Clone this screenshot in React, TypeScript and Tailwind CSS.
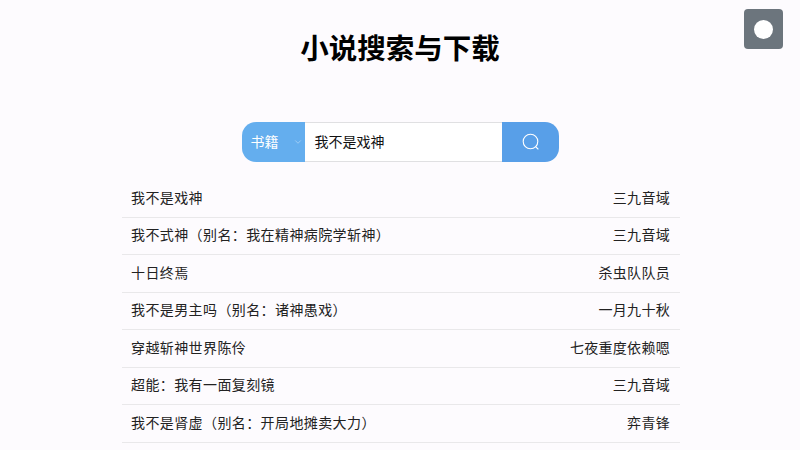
import React from 'react';
import { ChevronDown } from 'lucide-react';

const books = [
  { title: '我不是戏神', author: '三九音域' },
  { title: '我不式神（别名：我在精神病院学斩神）', author: '三九音域' },
  { title: '十日终焉', author: '杀虫队队员' },
  { title: '我不是男主吗（别名：诸神愚戏）', author: '一月九十秋' },
  { title: '穿越斩神世界陈伶', author: '七夜重度依赖嗯' },
  { title: '超能：我有一面复刻镜', author: '三九音域' },
  { title: '我不是肾虚（别名：开局地摊卖大力）', author: '弈青锋' },
];

const App: React.FC = () => {
  return (
    <div className="relative h-[450px] w-[800px] overflow-hidden bg-[#fdfbfe] font-['Noto_Sans_CJK_SC','Noto_Sans',sans-serif]">
      <h1 className="pt-[27px] text-center text-[28.5px] leading-[40px] font-bold text-black">小说搜索与下载</h1>

      <div className="mt-[55px] ml-[242px] flex h-[40px] w-[317px] overflow-hidden rounded-[14px]">
        <div className="flex w-[63px] items-center justify-between bg-[#64aeee] pr-[2px] pb-[2px] pl-[8.5px] text-[14px] text-white">
          <span>书籍</span>
          <ChevronDown size={10} strokeWidth={1.25} className="mt-[2px] text-white/70" />
        </div>
        <div className="flex flex-1 items-center border-y border-[#e0e0e2] bg-white pb-[1px] pl-[9.5px] text-[14px] text-[#111]">我不是戏神</div>
        <div className="flex w-[57px] items-center justify-center bg-[#589fe8]">
          <svg width="20" height="20" viewBox="0 0 20 20" fill="none" stroke="white" strokeWidth="1.1" strokeLinecap="round">
            <circle cx="9.5" cy="9.5" r="7.3" />
            <path d="M14.8 14.8 L17 17" />
          </svg>
        </div>
      </div>

      <div className="mt-[18px] ml-[122px] w-[558px]">
        {books.map((book) => (
          <div
            key={book.title}
            className="flex h-[37.5px] items-center justify-between border-b border-[#e9e8ea] pr-[10px] pb-[2px] pl-[9px] text-[14px] text-[#222]"
          >
            <span className="tracking-[0.4px]">{book.title}</span>
            <span className="tracking-[0.3px]">{book.author}</span>
          </div>
        ))}
      </div>

      {/* floating button */}
      <div className="absolute top-[9px] left-[744px] flex h-[40px] w-[39px] items-center justify-center rounded-[4px] bg-[#6c757d]">
        <div className="h-[19px] w-[19px] rounded-full bg-white" />
      </div>
    </div>
  );
};

export default App;
